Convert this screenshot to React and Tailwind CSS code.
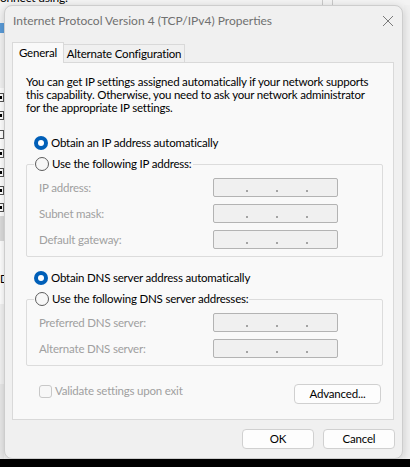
import React from "react";

const Radio = ({ checked }) =>
  checked ? (
    <span className="flex h-[14px] w-[14px] shrink-0 items-center justify-center rounded-full bg-[#005fb8]">
      <span className="h-[6px] w-[6px] rounded-full bg-white" />
    </span>
  ) : (
    <span className="h-[14px] w-[14px] shrink-0 rounded-full border border-[#5c5c5c] bg-[#f7f7f7]" />
  );

const IpField = () => (
  <div className="flex h-[19px] w-[125px] items-start gap-[28px] rounded-[2px] border border-[#b3b3b3] bg-[#f0f0f0] pl-[32px]">
    <span className="mt-[11px] h-[2px] w-[2px] rounded-full bg-[#8a8a8a]" />
    <span className="mt-[11px] h-[2px] w-[2px] rounded-full bg-[#8a8a8a]" />
    <span className="mt-[11px] h-[2px] w-[2px] rounded-full bg-[#8a8a8a]" />
  </div>
);

const FieldRow = ({ label }) => (
  <div className="flex h-[19px] items-center justify-between">
    <span className="text-[#a0a0a0]">{label}</span>
    <IpField />
  </div>
);

const RadioRow = ({ checked, children }) => (
  <div className="flex h-[16px] items-center gap-[3px]">
    <Radio checked={checked} />
    <span className="whitespace-nowrap text-black">{children}</span>
  </div>
);

const Group = ({ legend, rows }) => (
  <fieldset className="m-0 mr-[10px] rounded-[2px] border border-[#dcdcdc] px-[12px] pb-[7px] pt-[6px]">
    <legend className="ml-[-5px] px-[1px]">
      <RadioRow checked={false}>{legend}</RadioRow>
    </legend>
    <div className="flex flex-col gap-[7px] pr-[32px]">
      {rows.map((r) => (
        <FieldRow key={r} label={r} />
      ))}
    </div>
  </fieldset>
);

const Button = ({ children, className = "" }) => (
  <button
    className={
      "flex h-[20px] items-center justify-center rounded-[4px] border border-[#d0d0d0] bg-[#fdfdfd] text-black " +
      className
    }
  >
    {children}
  </button>
);

export default function App() {
  return (
    <div className="relative h-[467px] w-[410px] overflow-hidden bg-[#f3f3f3] font-['Lato',sans-serif] text-[11.5px] leading-[16px] tracking-[-0.2px]">
      {/* window underneath the dialog */}
      <div className="absolute left-0 top-[-10px] whitespace-nowrap text-[12px] text-black">onnect using:</div>
      <div className="absolute left-[322px] top-0 h-[6px] w-px bg-[#c9c9c9]" />
      <div className="absolute left-[332px] top-0 h-[6px] w-px bg-[#c9c9c9]" />
      <div className="absolute left-0 top-[23px] h-[10px] w-[4px] bg-[#5a9bd8]" />
      <div className="absolute left-0 top-[88px] h-[216px] w-[4px] bg-white" />
      {[97, 115, 134, 153, 172, 190, 207].map((y, i) => (
        <div
          key={y}
          className="absolute left-0 h-[9px] w-[4px] border-y border-r border-[#555]"
          style={{ top: y - 4 }}
        >
          {i !== 2 && <div className="mt-[2px] h-[3px] w-[2px] bg-black" />}
        </div>
      ))}
      <div className="absolute left-0 top-[216px] h-[25px] w-[4px] bg-[#dcdcdc]" />
      <div className="absolute left-0 top-[271px] text-[11px] text-black">D</div>
      <div className="absolute left-0 top-[384px] h-[75px] w-[4px] bg-[#e9e9e9]" />
      <div className="absolute left-[404px] top-[5px] h-[454px] w-[6px] bg-[#f0f0f0]" />
      <div className="absolute bottom-0 left-0 h-[8px] w-full bg-black" />

      {/* dialog window */}
      <div className="absolute left-[4px] top-[5px] flex h-[454px] w-[399px] flex-col rounded-[8px] border border-[#cdcdcd] bg-[#f0f0f0] shadow-[0_2px_8px_rgba(0,0,0,0.18)]">
        <div className="flex h-[29px] items-center justify-between pl-[8px] pr-[8px]">
          <span className="whitespace-nowrap text-[12px] tracking-normal text-[#707070]">
            Internet Protocol Version 4 (TCP/IPv4) Properties
          </span>
          <svg width="12" height="12" viewBox="0 0 12 12">
            <path d="M1 1L11 11M11 1L1 11" stroke="#7a7a7a" strokeWidth="1" />
          </svg>
        </div>

        <div className="ml-[7px] mt-[7px] flex items-end">
          <div className="relative z-10 mb-[-1px] flex h-[21px] w-[52px] items-center justify-center border border-b-0 border-[#d9d9d9] bg-[#f9f9f9] pb-[1px] text-black">
            General
          </div>
          <div className="flex h-[18px] w-[121px] items-center justify-center whitespace-nowrap border border-b-0 border-l-0 border-[#d9d9d9] bg-[#f0f0f0] text-black">
            Alternate Configuration
          </div>
        </div>

        <div className="ml-[7px] flex h-[358px] w-[382px] flex-col border border-[#d9d9d9] bg-[#f9f9f9] pl-[13px]">
          <p className="mt-[12px] whitespace-nowrap leading-[13px] text-black">
            You can get IP settings assigned automatically if your network supports
            <br />
            this capability. Otherwise, you need to ask your network administrator
            <br />
            for the appropriate IP settings.
          </p>

          <div className="ml-[8px] mt-[21px]">
            <RadioRow checked>Obtain an IP address automatically</RadioRow>
          </div>
          <div className="mt-[5px]">
            <Group
              legend="Use the following IP address:"
              rows={["IP address:", "Subnet mask:", "Default gateway:"]}
            />
          </div>

          <div className="ml-[8px] mt-[13px]">
            <RadioRow checked>Obtain DNS server address automatically</RadioRow>
          </div>
          <div className="mt-[5px]">
            <Group
              legend="Use the following DNS server addresses:"
              rows={["Preferred DNS server:", "Alternate DNS server:"]}
            />
          </div>

          <div className="mt-[17px] flex items-start justify-between pl-[13px] pr-[12px]">
            <div className="flex h-[16px] items-center gap-[3px]">
              <span className="h-[13px] w-[13px] rounded-[3px] border border-[#c8c8c8] bg-[#f7f7f7]" />
              <span className="text-[#a0a0a0]">Validate settings upon exit</span>
            </div>
            <Button className="mt-[1px] w-[87px]">Advanced...</Button>
          </div>
        </div>

        <div className="mr-[7px] mt-[9px] flex justify-end gap-[9px]">
          <Button className="w-[72px]">OK</Button>
          <Button className="w-[72px]">Cancel</Button>
        </div>
      </div>
    </div>
  );
}
